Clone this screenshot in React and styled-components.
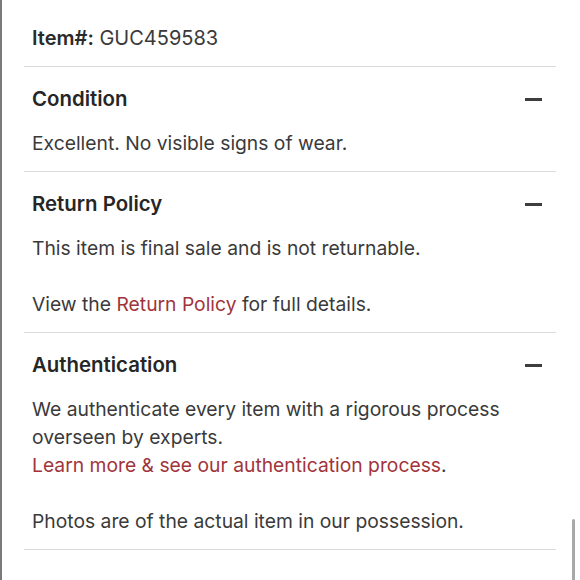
import React from "react"
import styled, { createGlobalStyle } from "styled-components"

const GlobalStyle = createGlobalStyle`
  html, body {
    margin: 0;
    padding: 0;
    background: #fff;
  }
  body {
    font-family: Inter, "Noto Sans", sans-serif;
    -webkit-font-smoothing: antialiased;
  }
`

const Page = styled.div`
  position: relative;
  height: 580px;
  overflow: hidden;
  border-left: 2px solid #7a7a7a;
  padding: 24px 24px 0 22px;
  box-sizing: border-box;
`

const Row = styled.div`
  padding: ${p => (p.$top ? "0 14px 14px 8px" : "18px 14px 14px 8px")};
  border-bottom: 1px solid #dcdcdc;
`

const ItemLine = styled.div`
  font-size: 20px;
  line-height: 28px;
  color: #3a3a3a;

  b {
    font-weight: 600;
    color: #2a2a2a;
  }
`

const Header = styled.div`
  display: flex;
  align-items: center;
  justify-content: space-between;
  margin-bottom: 16px;
`

const Title = styled.h3`
  margin: 0;
  font-size: 20.4px;
  line-height: 28px;
  font-weight: 600;
  color: #262626;
`

const Minus = styled.span`
  display: block;
  width: 17px;
  height: 3px;
  background: #3d3d3d;
  margin-top: 1px;
`

const Text = styled.p`
  margin: 0 0 ${p => (p.$last ? "0" : "28px")};
  font-size: 19.3px;
  line-height: 28px;
  color: #3a3a3a;
`

const Link = styled.a`
  color: #a1343b;
  text-decoration: none;
`

const ScrollThumb = styled.div`
  position: absolute;
  right: 5px;
  top: 519px;
  width: 3px;
  height: 70px;
  border-radius: 2px;
  background: #a8a8a8;
`

const Section = ({ title, children }) => (
  <Row>
    <Header>
      <Title>{title}</Title>
      <Minus />
    </Header>
    {children}
  </Row>
)

export default function App() {
  return (
    <>
      <GlobalStyle />
      <Page>
        <Row $top>
          <ItemLine><b>Item#:</b> GUC459583</ItemLine>
        </Row>
        <Section title="Condition">
          <Text $last>Excellent. No visible signs of wear.</Text>
        </Section>
        <Section title="Return Policy">
          <Text>This item is final sale and is not returnable.</Text>
          <Text $last>View the <Link href="#">Return Policy</Link> for full details.</Text>
        </Section>
        <Section title="Authentication">
          <Text>
            We authenticate every item with a rigorous process overseen by experts.
            <br />
            <Link href="#">Learn more &amp; see our authentication process</Link>.
          </Text>
          <Text $last>Photos are of the actual item in our possession.</Text>
        </Section>
        <ScrollThumb />
      </Page>
    </>
  )
}
